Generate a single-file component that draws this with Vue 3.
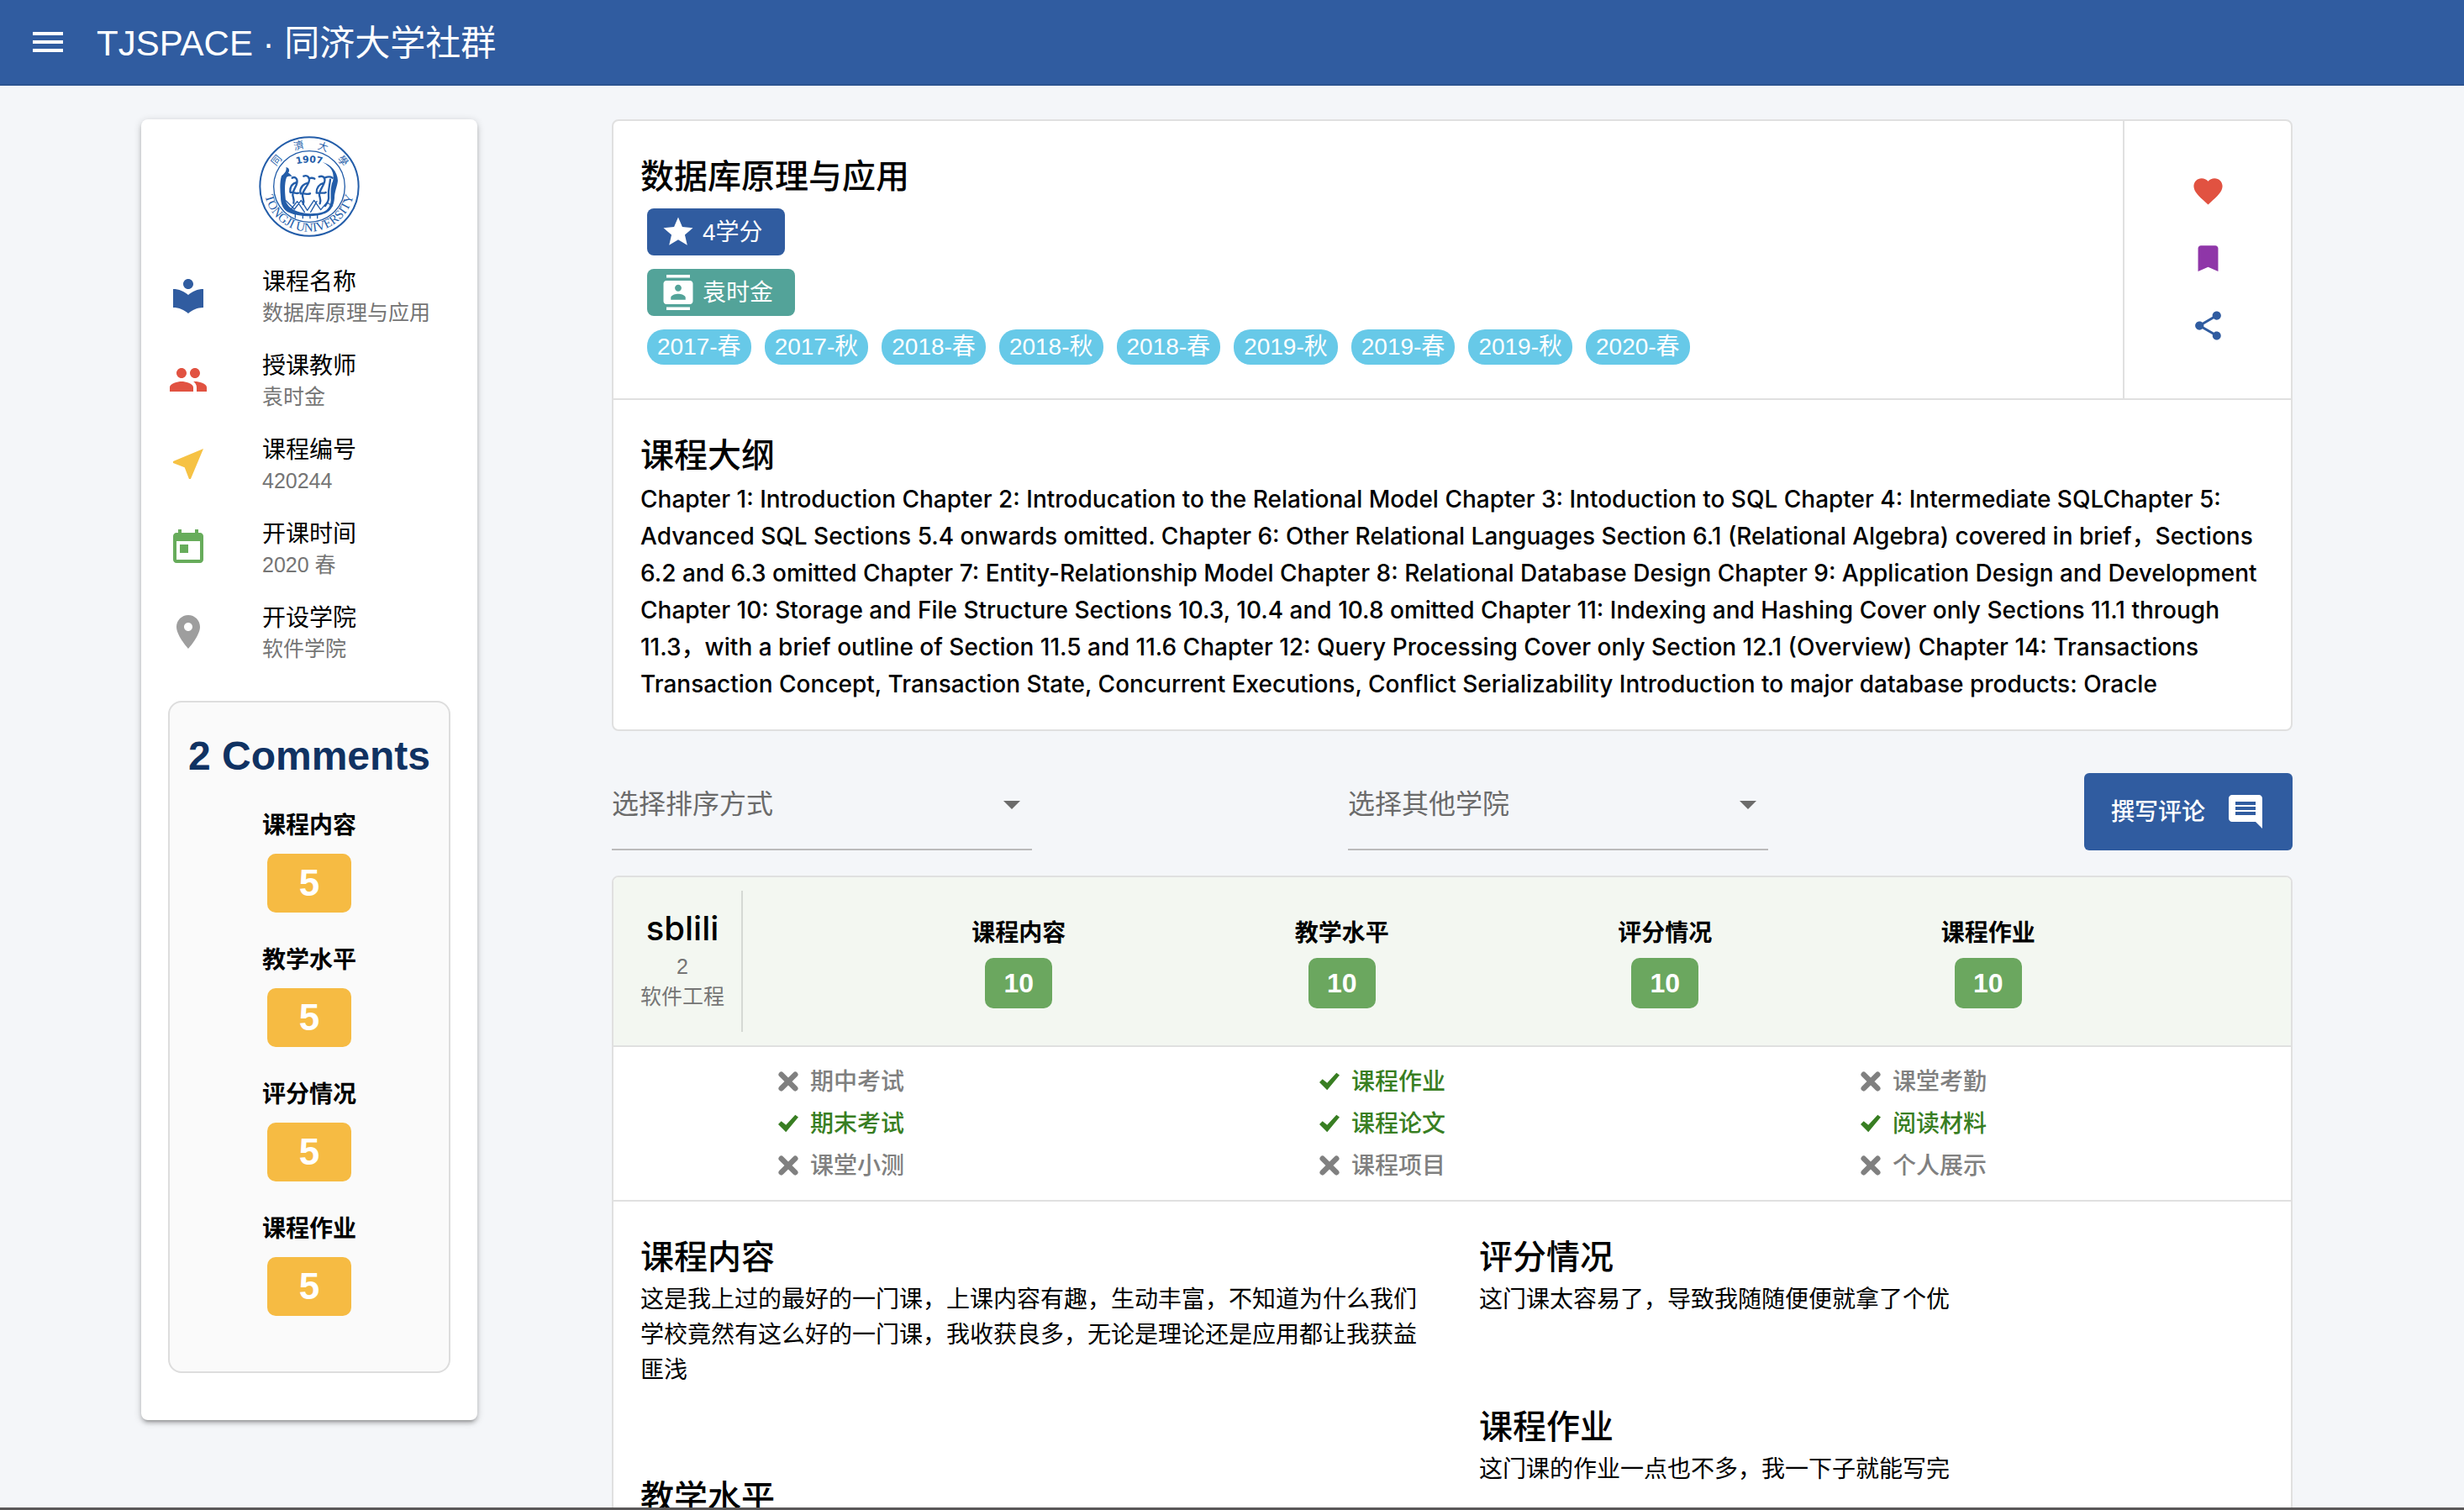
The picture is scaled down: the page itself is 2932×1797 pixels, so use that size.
<script setup>
import { ref } from 'vue'

const icons = {
  menu: 'M3 18h18v-2H3v2zm0-5h18v-2H3v2zm0-7v2h18V6H3z',
  library: 'M12 11.55C9.64 9.35 6.48 8 3 8v11c3.48 0 6.64 1.35 9 3.55 2.36-2.19 5.52-3.55 9-3.55V8c-3.48 0-6.64 1.35-9 3.55zM12 8c1.66 0 3-1.34 3-3s-1.34-3-3-3-3 1.34-3 3 1.34 3 3 3z',
  people: 'M16 11c1.66 0 2.99-1.34 2.99-3S17.66 5 16 5c-1.66 0-3 1.34-3 3s1.34 3 3 3zm-8 0c1.66 0 2.99-1.34 2.99-3S9.66 5 8 5C6.34 5 5 6.34 5 8s1.34 3 3 3zm0 2c-2.33 0-7 1.17-7 3.5V19h14v-2.5c0-2.33-4.67-3.5-7-3.5zm8 0c-.29 0-.62.02-.97.05 1.16.84 1.97 1.97 1.97 3.45V19h6v-2.5c0-2.33-4.67-3.5-7-3.5z',
  near: 'M21 3L3 10.53v.98l6.84 2.65L12.48 21h.98L21 3z',
  today: 'M19 3h-1V1h-2v2H8V1H6v2H5c-1.11 0-1.99.9-1.99 2L3 19c0 1.1.89 2 2 2h14c1.1 0 2-.9 2-2V5c0-1.1-.9-2-2-2zm0 16H5V8h14v11zM7 10h5v5H7z',
  place: 'M12 2C8.13 2 5 5.13 5 9c0 5.25 7 13 7 13s7-7.75 7-13c0-3.87-3.13-7-7-7zm0 9.5c-1.38 0-2.5-1.12-2.5-2.5s1.12-2.5 2.5-2.5 2.5 1.12 2.5 2.5-1.12 2.5-2.5 2.5z',
  star: 'M12 17.27L18.18 21l-1.64-7.03L22 9.24l-7.19-.61L12 2 9.19 8.63 2 9.24l5.46 4.73L5.82 21z',
  contacts: 'M20 0H4v2h16V0zM4 24h16v-2H4v2zM20 4H4c-1.1 0-2 .9-2 2v12c0 1.1.9 2 2 2h16c1.1 0 2-.9 2-2V6c0-1.1-.9-2-2-2zm-8 2.75c1.24 0 2.25 1.01 2.25 2.25s-1.01 2.25-2.25 2.25S9.75 10.24 9.75 9 10.76 6.75 12 6.75zM17 17H7v-1.5c0-1.67 3.33-2.5 5-2.5s5 .83 5 2.5V17z',
  favorite: 'M12 21.35l-1.45-1.32C5.4 15.36 2 12.28 2 8.5 2 5.42 4.42 3 7.5 3c1.74 0 3.41.81 4.5 2.09C13.09 3.81 14.76 3 16.5 3 19.58 3 22 5.42 22 8.5c0 3.78-3.4 6.86-8.55 11.54L12 21.35z',
  bookmark: 'M17 3H7c-1.1 0-1.99.9-1.99 2L5 21l7-3 7 3V5c0-1.1-.9-2-2-2z',
  share: 'M18 16.08c-.76 0-1.44.3-1.96.77L8.91 12.7c.05-.23.09-.46.09-.7s-.04-.47-.09-.7l7.05-4.11c.54.5 1.25.81 2.04.81 1.66 0 3-1.34 3-3s-1.34-3-3-3-3 1.34-3 3c0 .24.04.47.09.7L8.04 9.81C7.5 9.31 6.79 9 6 9c-1.66 0-3 1.34-3 3s1.34 3 3 3c.79 0 1.5-.31 2.04-.81l7.12 4.16c-.05.21-.08.43-.08.65 0 1.61 1.31 2.92 2.92 2.92 1.61 0 2.92-1.31 2.92-2.92s-1.31-2.92-2.92-2.92z',
  comment: 'M21.99 4c0-1.1-.89-2-1.99-2H4c-1.1 0-2 .9-2 2v12c0 1.1.9 2 2 2h14l4 4-.01-18zM18 14H6v-2h12v2zm0-3H6V9h12v2zm0-3H6V6h12v2z',
  arrow: 'M7 10l5 5 5-5z'
}

const facts = [
  { icon: 'library', tone: 'blue', label: '课程名称', value: '数据库原理与应用' },
  { icon: 'people', tone: 'red', label: '授课教师', value: '袁时金' },
  { icon: 'near', tone: 'amber', label: '课程编号', value: '420244' },
  { icon: 'today', tone: 'green', label: '开课时间', value: '2020 春' },
  { icon: 'place', tone: 'grey', label: '开设学院', value: '软件学院' }
]

const dimensions = ['课程内容', '教学水平', '评分情况', '课程作业']

const terms = ['2017-春', '2017-秋', '2018-春', '2018-秋', '2018-春', '2019-秋', '2019-春', '2019-秋', '2020-春']

const actions = [
  { icon: 'favorite', tone: 'red', label: '喜欢' },
  { icon: 'bookmark', tone: 'purple', label: '收藏' },
  { icon: 'share', tone: 'blue', label: '分享' }
]

const syllabus = 'Chapter 1: Introduction Chapter 2: Introducation to the Relational Model Chapter 3: Intoduction to SQL Chapter 4: Intermediate SQLChapter 5: Advanced SQL Sections 5.4 onwards omitted. Chapter 6: Other Relational Languages Section 6.1 (Relational Algebra) covered in brief，Sections 6.2 and 6.3 omitted Chapter 7: Entity-Relationship Model Chapter 8: Relational Database Design Chapter 9: Application Design and Development Chapter 10: Storage and File Structure Sections 10.3, 10.4 and 10.8 omitted Chapter 11: Indexing and Hashing Cover only Sections 11.1 through 11.3，with a brief outline of Section 11.5 and 11.6 Chapter 12: Query Processing Cover only Section 12.1 (Overview) Chapter 14: Transactions Transaction Concept, Transaction State, Concurrent Executions, Conflict Serializability Introduction to major database products: Oracle'

const sort = ref('')
const college = ref('')

const criteria = [
  [['期中考试', false], ['期末考试', true], ['课堂小测', false]],
  [['课程作业', true], ['课程论文', true], ['课程项目', false]],
  [['课堂考勤', false], ['阅读材料', true], ['个人展示', false]]
]

const reviewColumns = [
  [
    { title: '课程内容', text: '这是我上过的最好的一门课，上课内容有趣，生动丰富，不知道为什么我们学校竟然有这么好的一门课，我收获良多，无论是理论还是应用都让我获益匪浅' },
    { title: '教学水平', text: '' }
  ],
  [
    { title: '评分情况', text: '这门课太容易了，导致我随随便便就拿了个优' },
    { title: '课程作业', text: '这门课的作业一点也不多，我一下子就能写完' }
  ]
]
</script>

<template>
  <div class="shell">
    <header class="topbar">
      <button class="menu" aria-label="菜单">
        <svg class="icon" viewBox="0 0 24 24"><path :d="icons.menu" /></svg>
      </button>
      <h1>TJSPACE · 同济大学社群</h1>
    </header>

    <div class="page">
      <aside class="sidebar">
        <svg class="crest" viewBox="55 35 360 360" role="img" aria-label="同济大学">
          <defs>
            <path id="crest-lower" d="M74 215A161 161 0 0 0 396 215" />
            <path id="crest-year" d="M173 140A180 180 0 0 1 297 140" />
          </defs>
          <circle cx="235" cy="215" r="176" class="ring" stroke-width="6" />
          <circle cx="235" cy="215" r="127" class="ring" stroke-width="4" />
          <text class="latin"><textPath href="#crest-lower" startOffset="50%" text-anchor="middle">TONGJI UNIVERSITY</textPath></text>
          <text class="year"><textPath href="#crest-year" startOffset="50%" text-anchor="middle">1907</textPath></text>
          <g class="han">
            <text transform="translate(119 122) rotate(-50)" y="11">同</text>
            <text transform="translate(198 70) rotate(-14)" y="11">濟</text>
            <text transform="translate(284 74) rotate(18)" y="11">大</text>
            <text transform="translate(354 124) rotate(52)" y="11">學</text>
          </g>
          <path class="fill" d="M152 146c12 2 14 12 8 20 6 2 10 8 14 13-10-2-16-1-20 3-8 22-7 56-2 88 10 22 32 34 60 39 24 5 54 3 74-4 16-7 24-20 26-40 0-18-2-40 4-62 8-14 8-44-12-60-8-7-14-11-22-15 30 8 54 34 55 66-2 20-12 40-12 62-2 26-12 46-34 55-34 14-96 12-126-2-24-10-32-32-32-56-2-24-4-54 3-76 8-8 20-16 16-31z" />
          <g class="ring" stroke-width="7">
            <path d="M174 184c12-6 20 4 17 18-3 16-14 24-15 40-1 12 7 16 3 32M190 200c-16 4-24 16-23 34M168 236c14-2 20 6 28 2" />
            <path d="M215 178c14-6 24 6 18 22-6 18-20 26-22 44-1 12 8 18 2 34M234 186c12-4 16-1 20 1M232 202c-20 4-30 18-29 36M204 240c14-4 22 6 34 0" />
            <path d="M270 180c14-6 24 4 19 20-6 18-16 26-18 42-1 12 8 16 2 34M290 184c14-6 22-4 28 0M288 202c-18 4-28 18-27 36M262 238c14-4 22 4 32-2M310 190c-2 22-8 36-6 58 2 14-4 26-12 36" />
          </g>
          <g class="ring" stroke-width="4">
            <path d="M152 266l30 30 24-32 22 36 24-36 24 34 22-26 20 12M170 296l22-28 26 38M240 306l22-38M185 312v14M212 316v12M238 316v12M264 314v14" />
          </g>
        </svg>

        <ul class="facts">
          <li v-for="f in facts" :key="f.label">
            <svg class="icon" :class="f.tone" viewBox="0 0 24 24"><path :d="icons[f.icon]" /></svg>
            <div>
              <p class="label">{{ f.label }}</p>
              <p class="caption">{{ f.value }}</p>
            </div>
          </li>
        </ul>

        <section class="summary">
          <h2>2 Comments</h2>
          <div v-for="d in dimensions" :key="d" class="score">
            <h3>{{ d }}</h3>
            <span class="badge large">5</span>
          </div>
        </section>
      </aside>

      <main>
        <section class="card">
          <div class="overview">
            <div class="about">
              <h2 class="title">数据库原理与应用</h2>
              <span class="chip credit"><svg class="icon" viewBox="0 0 24 24"><path :d="icons.star" /></svg><span>4学分</span></span>
              <span class="chip teacher"><svg class="icon" viewBox="0 0 24 24"><path :d="icons.contacts" /></svg><span>袁时金</span></span>
              <div class="terms">
                <span v-for="(t, i) in terms" :key="i" class="term">{{ t }}</span>
              </div>
            </div>
            <div class="actions">
              <button v-for="a in actions" :key="a.icon" :aria-label="a.label">
                <svg class="icon" :class="a.tone" viewBox="0 0 24 24"><path :d="icons[a.icon]" /></svg>
              </button>
            </div>
          </div>
          <div class="syllabus">
            <h2 class="title">课程大纲</h2>
            <p>{{ syllabus }}</p>
          </div>
        </section>

        <div class="toolbar">
          <div class="field">
            <select v-model="sort" aria-label="选择排序方式">
              <option value="">选择排序方式</option>
            </select>
            <svg class="icon" viewBox="0 0 24 24"><path :d="icons.arrow" /></svg>
          </div>
          <div class="field">
            <select v-model="college" aria-label="选择其他学院">
              <option value="">选择其他学院</option>
            </select>
            <svg class="icon" viewBox="0 0 24 24"><path :d="icons.arrow" /></svg>
          </div>
          <button class="write"><span>撰写评论</span><svg class="icon" viewBox="0 0 24 24"><path :d="icons.comment" /></svg></button>
        </div>

        <article class="card">
          <header class="review-head">
            <div class="author">
              <h2 class="title">sblili</h2>
              <p class="caption">2</p>
              <p class="caption">软件工程</p>
            </div>
            <div class="scores">
              <div v-for="d in dimensions" :key="d" class="score">
                <h3>{{ d }}</h3>
                <span class="badge small">10</span>
              </div>
            </div>
          </header>
          <div class="criteria">
            <ul v-for="(column, i) in criteria" :key="i">
              <li v-for="[name, met] in column" :key="name" :class="{ met }">
                <svg v-if="met" class="mark" viewBox="0 0 26 26"><path d="M0 14l4-4 6 5L22 2l4 3L10 24z" /></svg>
                <svg v-else class="mark" viewBox="0 0 26 26"><path d="M4 4l18 18M22 4L4 22" class="cross" /></svg>
                <span>{{ name }}</span>
              </li>
            </ul>
          </div>
          <div class="reviews">
            <div v-for="(column, i) in reviewColumns" :key="i">
              <section v-for="r in column" :key="r.title">
                <h2 class="title">{{ r.title }}</h2>
                <p>{{ r.text }}</p>
              </section>
            </div>
          </div>
        </article>
      </main>
    </div>
  </div>
</template>

<style>
body {
  margin: 0;
}
</style>

<style scoped>
.shell {
  box-sizing: border-box;
  height: 100vh;
  overflow: hidden;
  display: flex;
  flex-direction: column;
  border-bottom: 3px solid #5a5859;
  background: #f4f6f9;
  color: #000;
  font: 28px/42px "Liberation Sans", "Noto Sans CJK SC", sans-serif;
}
.shell * {
  box-sizing: border-box;
}
h1, h2, h3, p, ul {
  margin: 0;
  padding: 0;
  list-style: none;
}
button {
  padding: 0;
  border: 0;
  background: none;
  font: inherit;
  cursor: pointer;
}
.icon {
  display: block;
  flex: none;
  width: 48px;
  height: 48px;
  fill: currentColor;
}
.blue { color: #305ca0; }
.red { color: #e15241; }
.amber { color: #f6c244; }
.green { color: #67ac5b; }
.grey { color: #9e9e9e; }
.purple { color: #8f36a8; }

.topbar {
  flex: none;
  display: flex;
  align-items: center;
  gap: 34px;
  height: 102px;
  padding-left: 33px;
  border-bottom: 2px solid #2b5390;
  background: #305ca0;
  color: #fff;
}
.menu {
  color: #fff;
}
h1 {
  padding-top: 4px;
  font-size: 42px;
  line-height: 60px;
  font-weight: 400;
}
.page {
  flex: none;
  display: flex;
  align-items: flex-start;
  gap: 160px;
  padding: 40px 204px 40px 168px;
}

.sidebar {
  flex: none;
  width: 400px;
  padding: 20px 32px 56px;
  border-radius: 8px;
  background: #fff;
  box-shadow: 0 2px 10px rgba(0, 0, 0, .2), 0 4px 4px rgba(0, 0, 0, .14), 0 6px 2px -4px rgba(0, 0, 0, .12);
}
.crest {
  display: block;
  width: 120px;
  height: 120px;
  margin: 0 auto;
  fill: #235da9;
}
.ring {
  fill: none;
  stroke: #235da9;
  stroke-linecap: round;
  stroke-linejoin: round;
}
.latin {
  font: 45px "Liberation Serif", serif;
}
.year {
  font: bold 33px "DejaVu Sans", sans-serif;
}
.han {
  font: 36px "Noto Sans CJK TC", sans-serif;
  text-anchor: middle;
}
.facts {
  padding: 20px 0 32px;
}
.facts li {
  display: flex;
  align-items: center;
  gap: 64px;
  height: 100px;
}
.facts div {
  padding-top: 4px;
}
.label {
  line-height: 36px;
}
.caption {
  color: #757575;
  font-size: 25px;
  line-height: 36px;
}
.summary {
  display: flex;
  flex-direction: column;
  align-items: center;
  gap: 24px;
  padding: 38px 0 66px;
  border: 2px solid #ddd;
  border-radius: 16px;
  background: #fafafa;
}
.summary h2 {
  color: #103262;
  font-size: 48px;
  line-height: 52px;
}
.score {
  display: flex;
  flex-direction: column;
  align-items: center;
}
h3 {
  font-size: 28px;
  line-height: 42px;
  font-weight: 700;
}
.badge {
  border-radius: 10px;
  color: #fff;
  font-weight: 700;
  text-align: center;
}
.summary h3 {
  margin: 12px 0;
}
.large {
  width: 100px;
  font-size: 44px;
  line-height: 70px;
  background: #f6bb43;
}
.small {
  width: 80px;
  font-size: 32px;
  line-height: 60px;
  background: #6ba75f;
}

main {
  flex: 1;
  min-width: 0;
}
.card {
  overflow: hidden;
  border: 2px solid #e0e0e0;
  border-radius: 8px;
  background: #fff;
}
.title {
  font-size: 40px;
  line-height: 60px;
  font-weight: 500;
}
.overview {
  display: flex;
  border-bottom: 2px solid #e0e0e0;
}
.about {
  flex: 1;
  display: flex;
  flex-direction: column;
  align-items: flex-start;
  gap: 16px;
  padding: 36px 32px 40px;
}
.about .title {
  margin-bottom: -8px;
}
.chip {
  display: flex;
  align-items: center;
  gap: 8px;
  height: 56px;
  margin-left: 8px;
  padding: 0 26px 0 16px;
  border-radius: 8px;
  color: #fff;
}
.chip .icon {
  width: 42px;
  height: 42px;
}
.credit { background: #305ca0; }
.teacher { background: #53a399; }
.terms {
  display: flex;
  flex-wrap: wrap;
  gap: 16px;
  margin-left: 8px;
}
.term {
  padding: 0 12px;
  border-radius: 20px;
  background: #67c9e8;
  color: #fff;
}
.actions {
  flex: none;
  display: flex;
  flex-direction: column;
  align-items: center;
  width: 200px;
  padding-top: 43px;
  border-left: 2px solid #e0e0e0;
}
.actions button {
  display: grid;
  place-items: center;
  width: 80px;
  height: 80px;
}
.actions .icon {
  width: 41px;
  height: 41px;
}
.syllabus {
  padding: 36px 32px 32px;
}
.syllabus p {
  font-family: Inter, "Noto Sans CJK SC", sans-serif;
  line-height: 44px;
  font-weight: 500;
}

.toolbar {
  display: flex;
  justify-content: space-between;
  padding: 50px 0 30px;
}
.field {
  display: grid;
  grid-template-columns: 1fr 48px;
  align-items: center;
  width: 25%;
  height: 92px;
  padding-bottom: 16px;
  border-bottom: 2px solid #bbb;
  color: #6b6b6b;
}
select {
  grid-area: 1 / 1 / 2 / 3;
  width: 100%;
  padding: 0;
  border: 0;
  background: none;
  appearance: none;
  color: inherit;
  font: inherit;
  font-size: 32px;
  line-height: 48px;
}
.field .icon {
  grid-area: 1 / 2;
  pointer-events: none;
}
.write {
  display: flex;
  align-items: center;
  gap: 24px;
  height: 92px;
  padding: 0 32px;
  border-radius: 6px;
  background: #305ca0;
  color: #fff;
  font-weight: 500;
}

.review-head {
  display: flex;
  padding: 16px 0;
  border-bottom: 2px solid #e0e0e0;
  background: #f3f7f1;
}
.author {
  display: flex;
  flex-direction: column;
  align-items: center;
  width: 154px;
  height: 168px;
  padding: 18px 20px 0 32px;
  border-right: 2px solid #d5d9d4;
}
.author .title {
  font-family: Inter, sans-serif;
  line-height: 54px;
}
.scores {
  flex: 1;
  display: grid;
  grid-template-columns: repeat(4, 1fr);
  padding: 30px 168px 0 136px;
}
.scores h3 {
  margin-bottom: 8px;
}
.criteria {
  display: flex;
  gap: 494px;
  padding: 16px 0 16px 196px;
  border-bottom: 2px solid #e0e0e0;
  color: #808080;
  font-weight: 500;
}
.criteria li {
  display: flex;
  align-items: center;
  gap: 14px;
  width: 150px;
  height: 50px;
  white-space: nowrap;
}
.chip span,
.write span,
.criteria span {
  padding-top: 2px;
}
.met {
  color: #387e22;
}
.mark {
  width: 26px;
  height: 26px;
  fill: currentColor;
}
.cross {
  stroke: currentColor;
  stroke-width: 7;
  stroke-linecap: round;
}
.reviews {
  display: grid;
  grid-template-columns: 1fr 1fr;
}
.reviews > div {
  padding: 36px 32px;
}
.reviews section {
  margin-bottom: 100px;
}
</style>
